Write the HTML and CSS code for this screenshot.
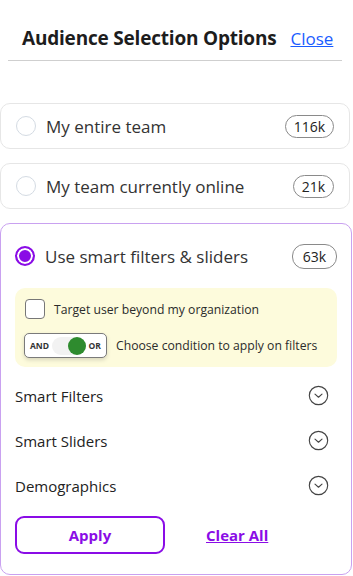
FILE: index.html
```html
<!doctype html>
<html lang="en">
<head>
    <meta charset="UTF-8" />
    <meta name="viewport" content="width=device-width, initial-scale=1.0" />
    <title>Audience Selection Options</title>
    <link rel="stylesheet" href="styles.css">
</head>
<body>
    <div class="panel">
        <div class="header">
            <h1>Audience Selection Options</h1>
            <a href="#" class="close">Close</a>
        </div>

        <div class="option">
            <span class="radio"></span>
            <span class="option-label">My entire team</span>
            <span class="badge">116k</span>
        </div>

        <div class="option">
            <span class="radio"></span>
            <span class="option-label">My team currently online</span>
            <span class="badge">21k</span>
        </div>

        <div class="option option-active">
            <div class="option-head">
                <span class="radio checked"></span>
                <span class="option-label">Use smart filters &amp; sliders</span>
                <span class="badge">63k</span>
            </div>

            <div class="conditions">
                <label class="check-row">
                    <span class="checkbox"></span>
                    <span>Target user beyond my organization</span>
                </label>
                <div class="check-row">
                    <span class="switch">
                        <span class="switch-text">AND</span>
                        <span class="switch-track"><span class="switch-knob"></span></span>
                        <span class="switch-text">OR</span>
                    </span>
                    <span>Choose condition to apply on filters</span>
                </div>
            </div>

            <div class="section">
                <span>Smart Filters</span>
                <svg class="chevron" viewBox="0 0 24 24"><circle cx="12" cy="12" r="10.5"/><path d="M8 10.5l4 3.5 4-3.5"/></svg>
            </div>
            <div class="section">
                <span>Smart Sliders</span>
                <svg class="chevron" viewBox="0 0 24 24"><circle cx="12" cy="12" r="10.5"/><path d="M8 10.5l4 3.5 4-3.5"/></svg>
            </div>
            <div class="section">
                <span>Demographics</span>
                <svg class="chevron" viewBox="0 0 24 24"><circle cx="12" cy="12" r="10.5"/><path d="M8 10.5l4 3.5 4-3.5"/></svg>
            </div>

            <div class="actions">
                <button class="btn-apply">Apply</button>
                <a href="#" class="clear">Clear All</a>
            </div>
        </div>
    </div>
</body>
</html>
```

FILE: styles.css
```css
* {
    margin: 0;
    padding: 0;
    box-sizing: border-box;
}

body {
    font-family: "Open Sans", "Liberation Sans", sans-serif;
    background: white;
    color: #2b2b2b;
    width: 353px;
}

.panel {
    padding: 0 1px 0 0;
}

.header {
    display: flex;
    align-items: center;
    gap: 14px;
    margin: 0 10px 0 8px;
    padding: 25px 0 9px 14px;
    border-bottom: 1px solid #cfcfcf;
}

.header h1 {
    font-size: 19px;
    font-weight: 700;
    color: #1d1d1d;
    letter-spacing: -0.2px;
}

.close {
    color: #1a5cff;
    font-size: 17px;
}

.option {
    display: flex;
    align-items: center;
    height: 46px;
    margin: 0 2px 14px 0;
    padding: 0 15px;
    border: 1px solid #e6e6e6;
    border-radius: 10px;
}

.header + .option {
    margin-top: 42px;
}

.option-label {
    flex: 1;
    font-size: 17px;
    color: #333;
    margin-left: 10px;
}

.radio {
    width: 20px;
    height: 20px;
    border-radius: 50%;
    border: 1px solid #d4dbe3;
    flex-shrink: 0;
}

.radio.checked {
    border: 2px solid #8a0ce6;
    box-shadow: inset 0 0 0 2px white;
    background: #8a0ce6;
}

.badge {
    font-size: 14px;
    padding: 1px 8px;
    border: 1px solid #8a8a8a;
    border-radius: 12px;
    color: #222;
}

.option-active {
    display: block;
    height: auto;
    margin: 0;
    padding: 0 14px 20px;
    border-color: #c9a1f0;
}

.option-head {
    display: flex;
    align-items: center;
    height: 64px;
}

.option-head .badge {
    padding: 2px 10px;
}

.conditions {
    background: #fdfbdc;
    border-radius: 10px;
    padding: 11px 9px 9px;
    display: flex;
    flex-direction: column;
    gap: 14px;
    margin-bottom: 6px;
}

.check-row {
    display: flex;
    align-items: center;
    gap: 9px;
    font-size: 12.2px;
    color: #2b2b2b;
    white-space: nowrap;
}

.checkbox {
    width: 20px;
    height: 20px;
    border: 1.5px solid #777;
    border-radius: 4px;
    background: white;
    margin-left: 1px;
}

.switch {
    display: flex;
    align-items: center;
    gap: 3px;
    width: 83px;
    height: 25px;
    padding: 0 5px;
    background: white;
    border: 1px solid #7a7a7a;
    border-radius: 5px;
    box-shadow: 0 2px 4px rgba(0, 0, 0, 0.15);
}

.switch-text {
    font-size: 8.5px;
    font-weight: 700;
    color: #333;
}

.switch-track {
    display: flex;
    justify-content: flex-end;
    width: 37px;
    height: 18px;
    background: #f2f2f2;
    border-radius: 9px;
}

.switch-knob {
    width: 18px;
    height: 18px;
    border-radius: 50%;
    background: #2e8b2e;
}

.section {
    display: flex;
    align-items: center;
    justify-content: space-between;
    height: 45px;
    font-size: 15px;
    color: #222;
    padding-right: 8px;
}

.chevron {
    width: 21px;
    height: 21px;
    fill: none;
    stroke: #444;
    stroke-width: 1.3;
    stroke-linecap: round;
    stroke-linejoin: round;
}

.actions {
    display: flex;
    align-items: center;
    gap: 41px;
    margin-top: 8px;
}

.btn-apply {
    width: 150px;
    height: 38px;
    background: white;
    border: 2px solid #8a0ce6;
    border-radius: 9px;
    color: #8a0ce6;
    font-family: inherit;
    font-size: 15px;
    font-weight: 700;
}

.clear {
    color: #8a0ce6;
    font-size: 15px;
    font-weight: 700;
}
```
